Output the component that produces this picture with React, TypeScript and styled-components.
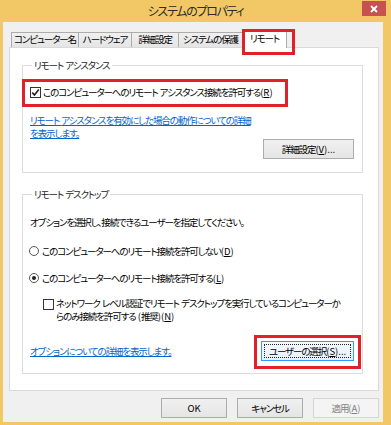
import React from 'react';
import styled, { createGlobalStyle } from 'styled-components';

const GlobalStyle = createGlobalStyle`
  html, body {
    margin: 0;
    padding: 0;
    background: #f2c766;
    overflow: hidden;
  }
  body {
    font-family: "Noto Sans CJK JP", "Noto Sans", sans-serif;
    font-size: 9.5px;
    letter-spacing: -1.1px;
    font-feature-settings: "palt";
    color: #000;
  }
`;

const tabs = ['コンピューター名', 'ハードウェア', '詳細設定', 'システムの保護', 'リモート'];
const tabWidths = [68, 54, 48, 65, 45];

const Window = styled.div`
  width: 391px;
  height: 425px;
  box-sizing: border-box;
  overflow: hidden;
  background: #f2c766;
  display: flex;
  flex-direction: column;
`;

const TitleBar = styled.div`
  height: 22px;
  flex: none;
  display: grid;
  grid-template-columns: 1fr auto 1fr;
`;

const Title = styled.div`
  grid-column: 2;
  align-self: center;
  font-size: 12px;
  letter-spacing: -1.3px;
  line-height: 16px;
  color: #2b2b2b;
`;

const CloseButton = styled.div`
  grid-column: 3;
  justify-self: end;
  width: 24px;
  height: 15px;
  margin: 1px 5px 0 0;
  background: #c75050;
  display: flex;
  align-items: center;
  justify-content: center;
`;

const Client = styled.div`
  flex: 1;
  min-width: 0;
  margin: 0 8px 3px 3px;
  padding: 7px 4px 0 6px;
  background: #f0f0f0;
  display: flex;
  flex-direction: column;
`;

const TabStrip = styled.div`
  display: flex;
  align-items: flex-end;
  height: 19px;
  margin: 0 0 -1px 2px;
`;

const Tab = styled.div<{ $width: number; $active?: boolean }>`
  box-sizing: border-box;
  position: relative;
  width: ${(p) => p.$width}px;
  height: ${(p) => (p.$active ? 19 : 15)}px;
  margin: 0 0 ${(p) => (p.$active ? 0 : 1)}px -1px;
  border: 1px solid #acacac;
  border-bottom: none;
  background: ${(p) => (p.$active ? '#fff' : 'linear-gradient(#f0f0f0, #e5e5e5)')};
  z-index: ${(p) => (p.$active ? 1 : 0)};
  line-height: ${(p) => (p.$active ? 16 : 13)}px;
  text-align: center;
  white-space: nowrap;
  &:first-child {
    margin-left: 0;
  }
`;

const Frame = styled.div<{ $inset: string }>`
  position: absolute;
  inset: ${(p) => p.$inset};
  box-sizing: border-box;
  border: 3px solid #e0202b;
  pointer-events: none;
  z-index: 2;
`;

const Panel = styled.div`
  box-sizing: border-box;
  height: 344px;
  border: 1px solid #d9d9d9;
  background: #fff;
  padding: 10px 15px 0 12px;
  display: flex;
  flex-direction: column;
  gap: 14px;
`;

const Group = styled.fieldset<{ $height: number }>`
  box-sizing: border-box;
  height: ${(p) => p.$height}px;
  margin: 0;
  padding: 0 7px;
  border: 1px solid #dcdcdc;
  min-inline-size: 0;
`;

const Legend = styled.legend`
  margin-left: 2px;
  padding: 0 2px;
  line-height: 14px;
  color: #1e1e1e;
`;

const GroupBody = styled.div`
  display: flex;
  flex-direction: column;
  align-items: flex-start;
`;

const Row = styled.div<{ $top: number; $indent?: number }>`
  position: relative;
  display: flex;
  align-items: center;
  margin-top: ${(p) => p.$top}px;
  margin-left: ${(p) => p.$indent || 0}px;
  line-height: 14px;
  white-space: nowrap;
`;

const WrapRow = styled(Row)`
  align-items: flex-start;
  line-height: 13px;
`;

const Check = styled.span<{ $nudge?: number }>`
  box-sizing: border-box;
  width: 11px;
  height: 11px;
  flex: none;
  margin: ${(p) => p.$nudge || 0}px 2px 0 0;
  border: 1px solid #333;
  background: #fff;
  display: flex;
  align-items: center;
  justify-content: center;
`;

const Radio = styled.span<{ $checked?: boolean }>`
  box-sizing: border-box;
  width: 10px;
  height: 10px;
  flex: none;
  margin: 0 3px 0 -1px;
  border: 1px solid #555;
  border-radius: 50%;
  background: #fff;
  display: flex;
  align-items: center;
  justify-content: center;
  &::after {
    content: '';
    width: 4px;
    height: 4px;
    border-radius: 50%;
    background: ${(p) => (p.$checked ? '#222' : 'transparent')};
  }
`;

const Text = styled.span`
  color: #000;
`;

/* latin bits (spaces, mnemonics) keep their natural spacing */
const Latin = styled.span`
  letter-spacing: 0;
`;

const Link = styled.a<{ $top: number }>`
  display: block;
  margin-top: ${(p) => p.$top}px;
  color: #0066cc;
  text-decoration: underline;
  line-height: 13px;
  white-space: nowrap;
`;

const Actions = styled.div<{ $top: number }>`
  align-self: stretch;
  display: flex;
  align-items: center;
  justify-content: space-between;
  margin-top: ${(p) => p.$top}px;
  margin-right: 1px;
`;

const Button = styled.button<{ $width: number; $focused?: boolean }>`
  position: relative;
  box-sizing: border-box;
  flex: none;
  width: ${(p) => p.$width}px;
  height: 20px;
  padding: 0;
  font: inherit;
  letter-spacing: inherit;
  font-feature-settings: inherit;
  white-space: nowrap;
  color: #000;
  border: 1px solid ${(p) => (p.$focused ? '#3399ff' : '#acacac')};
  background: ${(p) =>
    p.$focused ? 'linear-gradient(#f4f9fd, #e6f0fa)' : 'linear-gradient(#f0f0f0, #e5e5e5)'};
  line-height: 16px;
  &:disabled {
    color: #838383;
    border-color: #d5d5d5;
    background: #f4f4f4;
  }
  &::before {
    content: '';
    display: ${(p) => (p.$focused ? 'block' : 'none')};
    position: absolute;
    inset: 2px;
    border: 1px dotted #222;
  }
`;

const Footer = styled.div`
  display: flex;
  justify-content: flex-end;
  gap: 10px;
  margin-top: 7px;
`;

const Spacer = styled.div`
  flex: 1;
`;

const Sp = () => <Latin>{'\u00a0'}</Latin>;

const Key = ({ k }: { k: string }) => (
  <Latin>
    (<u>{k}</u>)
  </Latin>
);

const CheckMark = () => (
  <svg width="9" height="9" viewBox="0 0 9 9">
    <path d="M1.2 4.6 L3.5 7 L7.8 1.6" fill="none" stroke="#222" strokeWidth="1.6" />
  </svg>
);

const CloseGlyph = () => (
  <svg width="8" height="8" viewBox="0 0 8 8">
    <path d="M1 1 L7 7 M7 1 L1 7" stroke="#fff" strokeWidth="1.8" />
  </svg>
);

export default function App() {
  return (
    <>
      <GlobalStyle />
      <Window>
        <TitleBar>
          <Title>システムのプロパティ</Title>
          <CloseButton>
            <CloseGlyph />
          </CloseButton>
        </TitleBar>
        <Client>
          <TabStrip>
            {tabs.map((t, i) => (
              <Tab key={t} $width={tabWidths[i]} $active={t === 'リモート'}>
                {t}
                {t === 'リモート' && <Frame $inset="-1px -9px -7px -1px" />}
              </Tab>
            ))}
          </TabStrip>
          <Panel>
            <Group $height={115}>
              <Legend>
                リモート<Sp />アシスタンス
              </Legend>
              <GroupBody>
                <Row $top={13}>
                  <Check>
                    <CheckMark />
                  </Check>
                  <Text>
                    このコンピューターへのリモート<Sp />アシスタンス接続を許可する<Key k="R" />
                  </Text>
                  <Frame $inset="-6px -15px -8px -8px" />
                </Row>
                <Link $top={15}>
                  リモート<Sp />アシスタンスを有効にした場合の動作についての詳細
                  <br />
                  を表示します。
                </Link>
                <Actions $top={-1}>
                  <Spacer />
                  <Button $width={91}>
                    詳細設定<Key k="V" />
                    <Latin>...</Latin>
                  </Button>
                </Actions>
              </GroupBody>
            </Group>
            <Group $height={187}>
              <Legend>
                リモート<Sp />デスクトップ
              </Legend>
              <GroupBody>
                <Row $top={14}>
                  <Text>オプションを選択し、接続できるユーザーを指定してください。</Text>
                </Row>
                <Row $top={15}>
                  <Radio />
                  <Text>
                    このコンピューターへのリモート接続を許可しない<Key k="D" />
                  </Text>
                </Row>
                <Row $top={13}>
                  <Radio $checked />
                  <Text>
                    このコンピューターへのリモート接続を許可する<Key k="L" />
                  </Text>
                </Row>
                <WrapRow $top={12} $indent={13}>
                  <Check $nudge={2} />
                  <Text>
                    ネットワーク<Sp />レベル認証でリモート<Sp />デスクトップを実行しているコンピューターか
                    <br />
                    らのみ接続を許可する<Sp />
                    <Latin>(</Latin>推奨<Latin>)</Latin>
                    <Key k="N" />
                  </Text>
                </WrapRow>
                <Actions $top={18}>
                  <Link $top={0}>オプションについての詳細を表示します。</Link>
                  <Button $width={93} $focused>
                    ユーザーの選択<Key k="S" />
                    <Latin>...</Latin>
                    <Frame $inset="-7px -8px -9px -8px" />
                  </Button>
                </Actions>
              </GroupBody>
            </Group>
          </Panel>
          <Footer>
            <Button $width={66}>
              <Latin>OK</Latin>
            </Button>
            <Button $width={66}>キャンセル</Button>
            <Button $width={66} disabled>
              適用<Key k="A" />
            </Button>
          </Footer>
        </Client>
      </Window>
    </>
  );
}
